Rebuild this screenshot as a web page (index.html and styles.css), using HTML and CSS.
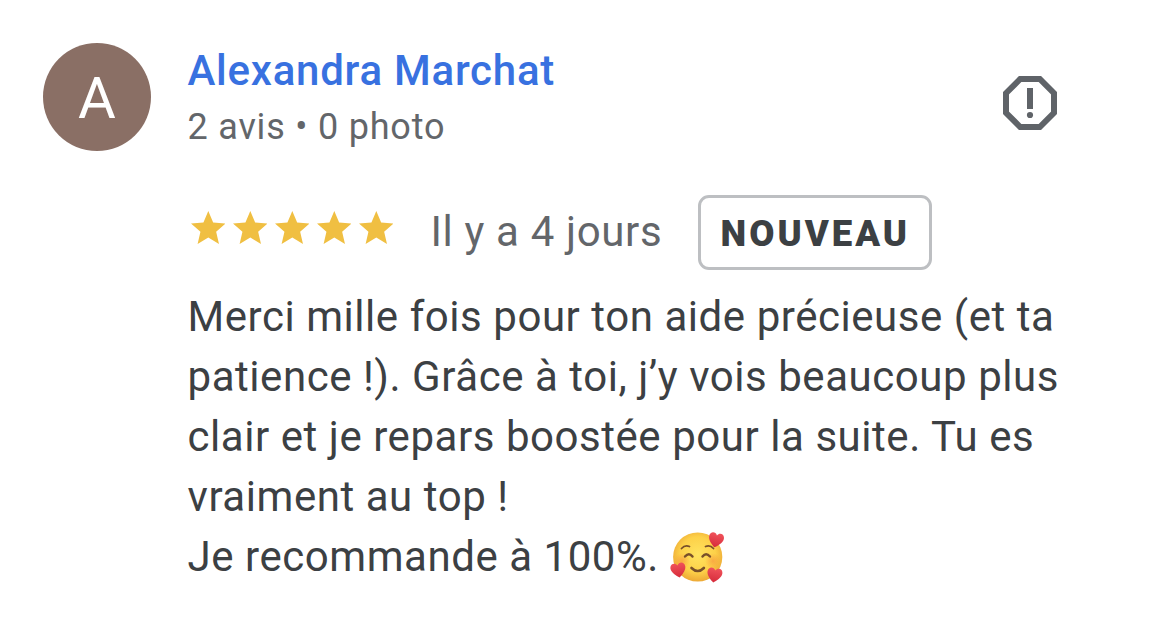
FILE: index.html
```html
<!DOCTYPE html>
<html lang="fr">
<head>
  <meta charset="UTF-8">
  <meta name="viewport" content="width=device-width, initial-scale=1.0">
  <title>Avis</title>
  <link rel="stylesheet" href="styles.css">
</head>
<body>
  <article class="review">
    <div class="avatar">A</div>
    <div class="content">
      <header class="head">
        <div class="author">
          <h1 class="name">Alexandra Marchat</h1>
          <p class="stats">2 avis • 0 photo</p>
        </div>
        <svg class="report" viewBox="0 0 54 54">
          <path d="M17.2 3h19.6L51 17.2v19.6L36.8 51H17.2L3 36.8V17.2z" fill="none" stroke="#5f6368" stroke-width="6"/>
          <path d="M24 12h6v21h-6z" fill="#5f6368"/>
          <circle cx="27" cy="39" r="3.1" fill="#5f6368"/>
        </svg>
      </header>
      <div class="meta">
        <div class="stars">
          <svg viewBox="0 0 20 19"><path d="M10 15.27 16.18 19l-1.64-7.03L20 7.24l-7.19-.61L10 0 7.19 6.63 0 7.24l5.46 4.73L3.82 19z"/></svg>
          <svg viewBox="0 0 20 19"><path d="M10 15.27 16.18 19l-1.64-7.03L20 7.24l-7.19-.61L10 0 7.19 6.63 0 7.24l5.46 4.73L3.82 19z"/></svg>
          <svg viewBox="0 0 20 19"><path d="M10 15.27 16.18 19l-1.64-7.03L20 7.24l-7.19-.61L10 0 7.19 6.63 0 7.24l5.46 4.73L3.82 19z"/></svg>
          <svg viewBox="0 0 20 19"><path d="M10 15.27 16.18 19l-1.64-7.03L20 7.24l-7.19-.61L10 0 7.19 6.63 0 7.24l5.46 4.73L3.82 19z"/></svg>
          <svg viewBox="0 0 20 19"><path d="M10 15.27 16.18 19l-1.64-7.03L20 7.24l-7.19-.61L10 0 7.19 6.63 0 7.24l5.46 4.73L3.82 19z"/></svg>
        </div>
        <span class="date">Il y a 4 jours</span>
        <span class="badge">NOUVEAU</span>
      </div>
      <p class="text">Merci mille fois pour ton aide précieuse (et ta<br>
        patience !). Grâce à toi, j’y vois beaucoup plus<br>
        clair et je repars boostée pour la suite. Tu es<br>
        vraiment au top !<br>
        Je recommande à 100%. <svg class="emoji" viewBox="0 0 54 54">
          <defs>
            <radialGradient id="face" cx="50%" cy="45%" r="55%">
              <stop offset="0" stop-color="#ffe35f"/>
              <stop offset=".65" stop-color="#fdd149"/>
              <stop offset="1" stop-color="#eda936"/>
            </radialGradient>
            <radialGradient id="cheek">
              <stop offset="0" stop-color="#f58a3c" stop-opacity=".55"/>
              <stop offset="1" stop-color="#f58a3c" stop-opacity="0"/>
            </radialGradient>
            <linearGradient id="red" x1="0" y1="0" x2="0" y2="1">
              <stop offset="0" stop-color="#f0525a"/>
              <stop offset="1" stop-color="#d62b3b"/>
            </linearGradient>
            <path id="heart" d="M0 7.5C-3 5.5-7.5 1.5-7.5-2.5c0-5 5.5-6 7.5-2 2-4 7.5-3 7.5 2 0 4-4.5 8-7.5 10z" fill="url(#red)"/>
          </defs>
          <circle cx="27.7" cy="27" r="24.6" fill="url(#face)"/>
          <circle cx="12" cy="31" r="8" fill="url(#cheek)"/>
          <circle cx="43" cy="31" r="8" fill="url(#cheek)"/>
          <g fill="none" stroke="#79502a" stroke-linecap="round">
            <path d="M11.5 18.5q3.5-4 8-2M35.5 16.5q4.5-2 8 2" stroke-width="1.8"/>
            <path d="M15 26.5q4-4.5 7.5 0M32.5 26.5q3.5-4.5 7.5 0" stroke-width="2.4"/>
            <path d="M21.5 38q6.2 6 12.4 0" stroke-width="2.6"/>
          </g>
          <use href="#heart" transform="translate(46 10) rotate(12)"/>
          <use href="#heart" transform="translate(8.3 40) rotate(-10)"/>
          <use href="#heart" transform="translate(44.5 45) rotate(10)"/>
        </svg></p>
    </div>
  </article>
</body>
</html>
```
FILE: styles.css
```css
* {
  margin: 0;
  padding: 0;
  box-sizing: border-box;
}

body {
  background: #fff;
  font-family: Roboto, "Liberation Sans", sans-serif;
}

.review {
  display: flex;
  gap: 36.5px;
  padding: 43px 80px 0 43px;
}

.avatar {
  flex: none;
  width: 108px;
  height: 108px;
  border-radius: 50%;
  background: #8a6f65;
  color: #fff;
  font-size: 58px;
  line-height: 110px;
  text-align: center;
}

.content {
  flex: 1;
}

.head {
  display: flex;
  justify-content: space-between;
  height: 152px;
  padding-right: 22px;
}

.name {
  color: #3871e0;
  font-size: 42px;
  font-weight: 500;
  line-height: 56px;
  letter-spacing: 0.75px;
}

.stats {
  color: #63666a;
  font-size: 36px;
  line-height: 56px;
  letter-spacing: 0.8px;
}

.report {
  width: 54px;
  height: 54px;
  margin-top: 33px;
}

.meta {
  display: flex;
  align-items: center;
  height: 75px;
}

.stars {
  display: flex;
  gap: 7.4px;
  margin: 0 37.3px 10px 3.2px;
}

.stars svg {
  width: 34.6px;
  height: 33px;
  fill: #f0bf42;
}

.date {
  margin-top: -2px;
  color: #63666a;
  font-size: 42px;
  letter-spacing: 0.65px;
}

.badge {
  width: 234px;
  height: 75px;
  margin-left: 36px;
  border: 3px solid #bdbfc2;
  border-radius: 11px;
  color: #3c4043;
  font-size: 36.5px;
  font-weight: 900;
  line-height: 71px;
  letter-spacing: 3px;
  text-align: center;
}

.text {
  margin-top: 17px;
  color: #3c4043;
  font-size: 42px;
  line-height: 60px;
  letter-spacing: 0.55px;
  white-space: nowrap;
}

.emoji {
  width: 54px;
  height: 54px;
  vertical-align: -13px;
}
```
